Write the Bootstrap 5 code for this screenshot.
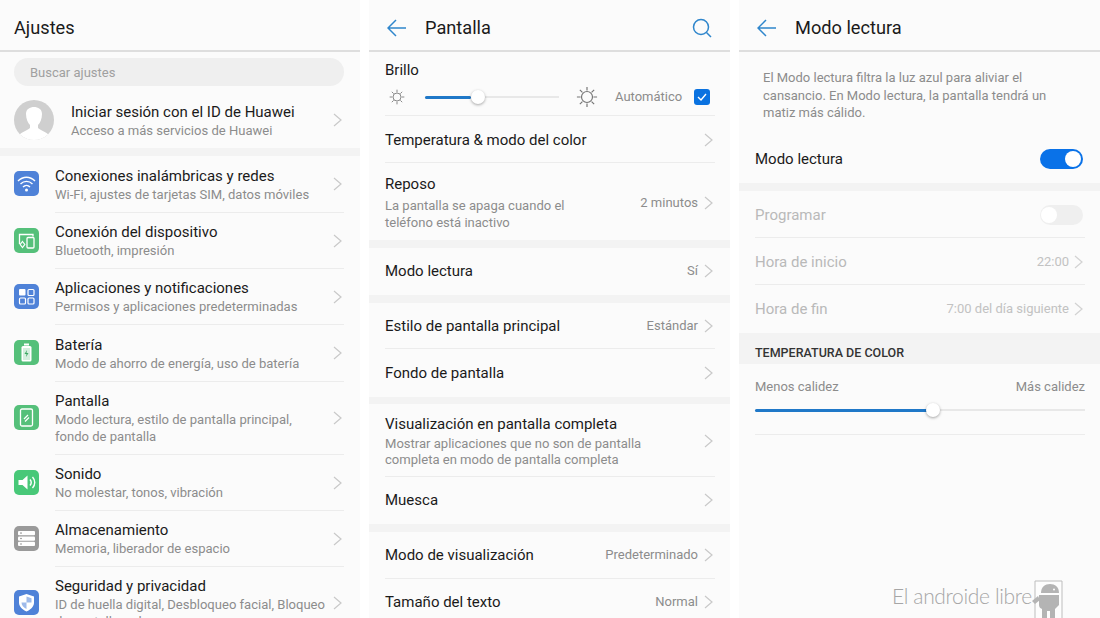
<!DOCTYPE html>
<html lang="es">
<head>
    <meta charset="UTF-8">
    <meta name="viewport" content="width=device-width, initial-scale=1.0">
    <title>Ajustes</title>
    <link href="https://cdn.jsdelivr.net/npm/bootstrap@5.3.0/dist/css/bootstrap.min.css" rel="stylesheet">
    <style>
        html, body { height: 618px; overflow: hidden; background: #fff; }
        body { font-family: Roboto, "Noto Sans", sans-serif; color: #1a1a1a; }
        .pantallas { height: 618px; gap: 9px; position: relative; }
        .panel { width: 361px; height: 618px; background: #fbfbfb; overflow: hidden; flex: none; }
        .panel.primero { width: 360px; }
        .cabecera { height: 52px; border-bottom: 2px solid #dedede; font-size: 18.2px; padding: 6px 0 0 14px; }
        .cabecera.con-flecha { padding-left: 18px; padding-right: 18px; }
        .cabecera svg { flex: none; }
        .cabecera .tit { margin-left: 18px; }
        .buscador { height: 28px; margin: 6px 16px 0 14px; background: #efefef; border-radius: 14px; padding-left: 16px; font-size: 13px; line-height: 29px; color: #a0a0a0; }
        .banda { height: 8px; background: #f3f3f3; }
        .banda.fina { height: 7px; }
        .perfil { height: 62px; padding: 6px 18px 0 14px; }
        .avatar { width: 40px; height: 40px; margin-right: 17px; flex: none; }
        .perfil .textos { padding-top: 2px; }
        .perfil .st { line-height: 18px; }
        .fila-ic { height: 56px; padding-left: 14px; padding-right: 16px; }
        .fila-ic .cuerpo { border-bottom: 1px solid #ececec; height: 100%; margin-left: 16px; min-width: 0; padding-right: 2px; }
        .fila-ic.larga { height: 57px; }
        .fila-ic.alta { height: 73px; }
        .fila-ic.ultima .cuerpo { padding-bottom: 2px; }
        .icono { width: 25px; height: 25px; flex: none; margin-top: -2px; }
        .tt { font-size: 15px; line-height: 20px; color: #1a1a1a; }
        .st { font-size: 13.05px; line-height: 17px; color: #8c8c8c; white-space: nowrap; }
        .st.junto { line-height: 16px; margin-top: 2px; }
        .st.separado { margin-top: 3px; }
        .flecha { width: 9px; height: 14px; flex: none; margin-left: 6px; }
        .fila { padding: 0 15px 0 16px; }
        .fila .cuerpo { height: 100%; border-bottom: 1px solid #ececec; padding-right: 2px; }
        .fila .sin-linea, .sin-linea { border-bottom: 0 !important; }
        .fila.alto-40 { height: 40px; }
        .fila.alto-46 { height: 46px; }
        .fila.alto-47 { height: 47px; }
        .fila.alto-48 { height: 48px; }
        .fila.alto-53 { height: 53px; }
        .fila.alto-73 { height: 73px; }
        .fila.alto-77 { height: 77px; }
        .fila .cuerpo.baja-1 { padding-top: 1px; }
        .fila .cuerpo.baja-2 { padding-top: 2px; }
        .fila .cuerpo.baja-5 { padding-top: 5px; }
        .fila .cuerpo.sube-1 { padding-bottom: 2px; }
        .valor { font-size: 13px; color: #8c8c8c; white-space: nowrap; }
        .fila .cuerpo.brillo { height: 64px; }
        .mando-brillo { margin-top: 6px; }
        .pista { height: 2px; background: #e8e8e8; position: relative; }
        .pista-brillo { width: 134px; margin: 0 17px 0 20px; }
        .pista-color { top: 14px; }
        .pista .relleno { position: absolute; left: 0; top: -0.5px; height: 3px; background: #1f78c8; border-radius: 2px; }
        .pista .mando { position: absolute; top: -6.5px; width: 14px; height: 14px; border-radius: 50%; background: #fff; box-shadow: 0 1px 3px rgba(0,0,0,.35); }
        .casilla { width: 16px; height: 16px; background: #0a72e0; border-radius: 3px; flex: none; }
        .auto { font-size: 13px; color: #8c8c8c; margin: 0 12px 0 17px; }
        .descripcion { font-size: 13px; line-height: 17.5px; color: #8c8c8c; padding: 17px 20px 0 24px; height: 78px; }
        .desactivado .tt { color: #b9b9b9; }
        .desactivado .valor { color: #c2c2c2; }
        .desactivado .flecha { opacity: .8; margin-left: 5px; }
        .interruptor { width: 43px; height: 20px; border-radius: 10px; flex: none; position: relative; background: #0a72e8; }
        .interruptor::after { content: ""; position: absolute; right: 2px; top: 2px; width: 16px; height: 16px; border-radius: 50%; background: #fff; }
        .interruptor.apagado { background: #efefef; }
        .interruptor.apagado::after { right: auto; left: 1px; top: 2px; }
        .seccion { height: 31px; background: #f3f3f3; font-size: 12.5px; font-weight: 500; color: #333; padding: 11px 16px 0; line-height: 17px; }
        .calidez { font-size: 13px; color: #8c8c8c; padding: 14px 15px 0 16px; line-height: 17px; }
        .marca { position: absolute; left: 892px; top: 580px; width: 172px; height: 38px; }
        .marca span { position: absolute; left: 0; top: 1px; font-family: Lato, "Open Sans", sans-serif; font-weight: 300; font-size: 21px; letter-spacing: -.35px; line-height: 30px; color: #a6a6a6; white-space: nowrap; }
        .marca svg { position: absolute; left: 141px; top: 0; overflow: visible; }
    </style>
</head>
<body>
    <svg width="0" height="0" class="d-block position-absolute">
        <symbol id="chev" viewBox="0 0 9 14"><path d="M1 1l7 6-7 6" fill="none" stroke="#c9c9c9" stroke-width="1.2"/></symbol>
        <symbol id="atras" viewBox="0 0 20 18"><path d="M1 9h18M9 1L1 9l8 8" fill="none" stroke="#2f86cc" stroke-width="1.5"/></symbol>
        <symbol id="sol" viewBox="0 0 24 24"><circle cx="12" cy="12" r="6" fill="none" stroke="#777" stroke-width="1.3"/><path d="M12 1v4M12 19v4M1 12h4M19 12h4M4.200 4.200L7 7M17 17l2.800 2.800M19.800 4.200L17 7M7 17l-2.800 2.800" stroke="#777" stroke-width="1.3"/></symbol>
    </svg>

    <div class="pantallas d-flex">
        <!-- Ajustes -->
        <div class="panel primero">
            <div class="cabecera d-flex align-items-center">Ajustes</div>
            <div class="buscador">Buscar ajustes</div>
            <div class="perfil d-flex align-items-center">
                <svg class="avatar" viewBox="0 0 40 40">
                    <defs><clipPath id="circ"><circle cx="20" cy="20" r="20"/></clipPath></defs>
                    <circle cx="20" cy="20" r="20" fill="#cfcfcf"/>
                    <g clip-path="url(#circ)">
                        <path d="M4 38c1-6 9-7 12-10v-3c-2-2-4-6-4-11 0-5 4-7 8-7s8 2 8 7c0 5-2 9-4 11v3c3 3 11 4 12 10v4H4z" fill="#fff"/>
                    </g>
                </svg>
                <div class="textos flex-grow-1">
                    <div class="tt">Iniciar sesión con el ID de Huawei</div>
                    <div class="st">Acceso a más servicios de Huawei</div>
                </div>
                <svg class="flecha"><use href="#chev"/></svg>
            </div>
            <div class="banda"></div>

            <div class="fila-ic larga d-flex align-items-center">
                <svg class="icono" viewBox="0 0 25 25"><rect width="25" height="25" rx="5" fill="#4f82d8"/><path d="M4 10c5-5 12-5 17 0M6.500 13c3.500-3.500 8.500-3.500 12 0M9 16c2-2 5-2 7 0" fill="none" stroke="#fff" stroke-width="1.4"/><circle cx="12.500" cy="19" r="1.500" fill="#fff"/></svg>
                <div class="cuerpo flex-grow-1 d-flex align-items-center">
                    <div class="flex-grow-1"><div class="tt">Conexiones inalámbricas y redes</div><div class="st">Wi-Fi, ajustes de tarjetas SIM, datos móviles</div></div>
                    <svg class="flecha"><use href="#chev"/></svg>
                </div>
            </div>
            <div class="fila-ic d-flex align-items-center">
                <svg class="icono" viewBox="0 0 25 25"><rect width="25" height="25" rx="5" fill="#55c07a"/><path d="M5.500 16V6.500h13.500v2" fill="none" stroke="#fff" stroke-width="1.300"/><rect x="13" y="9.500" width="7" height="10.500" rx="1" fill="none" stroke="#fff" stroke-width="1.300"/><path d="M8.500 13.500l2.300 3-2.300 3-2.300-3z" fill="none" stroke="#fff" stroke-width="1.200"/></svg>
                <div class="cuerpo flex-grow-1 d-flex align-items-center">
                    <div class="flex-grow-1"><div class="tt">Conexión del dispositivo</div><div class="st">Bluetooth, impresión</div></div>
                    <svg class="flecha"><use href="#chev"/></svg>
                </div>
            </div>
            <div class="fila-ic d-flex align-items-center">
                <svg class="icono" viewBox="0 0 25 25"><rect width="25" height="25" rx="5" fill="#4f82d8"/><rect x="5" y="5" width="6.500" height="6.500" rx="1" fill="#fff"/><rect x="14" y="5.500" width="6" height="6" rx="1" fill="none" stroke="#fff" stroke-width="1.200"/><rect x="5.500" y="14" width="6" height="6" rx="1" fill="none" stroke="#fff" stroke-width="1.200"/><rect x="14" y="14" width="6" height="6" rx="1" fill="none" stroke="#fff" stroke-width="1.200"/></svg>
                <div class="cuerpo flex-grow-1 d-flex align-items-center">
                    <div class="flex-grow-1"><div class="tt">Aplicaciones y notificaciones</div><div class="st">Permisos y aplicaciones predeterminadas</div></div>
                    <svg class="flecha"><use href="#chev"/></svg>
                </div>
            </div>
            <div class="fila-ic larga d-flex align-items-center">
                <svg class="icono" viewBox="0 0 25 25"><rect width="25" height="25" rx="5" fill="#55c07a"/><rect x="10" y="3.500" width="5" height="2" fill="#fff"/><rect x="7.500" y="6" width="10" height="15.500" rx="1.500" fill="#fff"/><rect x="9" y="8" width="7" height="12" fill="#55c07a" opacity=".25"/><path d="M13 10l-2.500 4h2l-.5 3 2.500-4h-2z" fill="#3da864"/></svg>
                <div class="cuerpo flex-grow-1 d-flex align-items-center">
                    <div class="flex-grow-1"><div class="tt">Batería</div><div class="st">Modo de ahorro de energía, uso de batería</div></div>
                    <svg class="flecha"><use href="#chev"/></svg>
                </div>
            </div>
            <div class="fila-ic alta d-flex align-items-center">
                <svg class="icono" viewBox="0 0 25 25"><rect width="25" height="25" rx="5" fill="#55c07a"/><rect x="6.500" y="4" width="12" height="17" rx="1.500" fill="none" stroke="#fff" stroke-width="1.300"/><path d="M10 14l4-4M11 16.500l4-4" stroke="#fff" stroke-width="1.200"/></svg>
                <div class="cuerpo flex-grow-1 d-flex align-items-center">
                    <div class="flex-grow-1"><div class="tt">Pantalla</div><div class="st">Modo lectura, estilo de pantalla principal,<br>fondo de pantalla</div></div>
                    <svg class="flecha"><use href="#chev"/></svg>
                </div>
            </div>
            <div class="fila-ic d-flex align-items-center">
                <svg class="icono" viewBox="0 0 25 25"><rect width="25" height="25" rx="5" fill="#48c878"/><path d="M4.500 10h4l5-4.500v14L8.500 15h-4z" fill="#fff"/><path d="M16 9.500c1.500 1.800 1.500 4.200 0 6M18.500 7c3 3.200 3 7.800 0 11" fill="none" stroke="#fff" stroke-width="1.400"/></svg>
                <div class="cuerpo flex-grow-1 d-flex align-items-center">
                    <div class="flex-grow-1"><div class="tt">Sonido</div><div class="st">No molestar, tonos, vibración</div></div>
                    <svg class="flecha"><use href="#chev"/></svg>
                </div>
            </div>
            <div class="fila-ic d-flex align-items-center">
                <svg class="icono" viewBox="0 0 25 25"><rect width="25" height="25" rx="5" fill="#9a9a9a"/><rect x="4" y="5" width="17" height="4.300" rx="1" fill="#fff"/><rect x="4" y="10.400" width="17" height="4.300" rx="1" fill="#fff"/><rect x="4" y="15.800" width="17" height="4.300" rx="1" fill="#fff"/><circle cx="7" cy="7.100" r=".8" fill="#888"/><circle cx="7" cy="12.500" r=".8" fill="#888"/><circle cx="7" cy="18" r=".8" fill="#888"/></svg>
                <div class="cuerpo flex-grow-1 d-flex align-items-center">
                    <div class="flex-grow-1"><div class="tt">Almacenamiento</div><div class="st">Memoria, liberador de espacio</div></div>
                    <svg class="flecha"><use href="#chev"/></svg>
                </div>
            </div>
            <div class="fila-ic alta ultima d-flex align-items-center">
                <svg class="icono" viewBox="0 0 25 25"><rect width="25" height="25" rx="5" fill="#4f82d8"/><path d="M12.500 4l7.500 2.500v6c0 4-3 7-7.500 9-4.500-2-7.500-5-7.500-9v-6z" fill="#fff"/><path d="M12.500 6.500v6H7.500c0 3 2 5 5 6.500v-6.500h5V8.200z" fill="#4f82d8" opacity=".55"/></svg>
                <div class="cuerpo flex-grow-1 d-flex align-items-center sin-linea">
                    <div class="flex-grow-1"><div class="tt">Seguridad y privacidad</div><div class="st">ID de huella digital, Desbloqueo facial, Bloqueo<br>de pantalla y claves</div></div>
                    <svg class="flecha"><use href="#chev"/></svg>
                </div>
            </div>
        </div>

        <!-- Pantalla -->
        <div class="panel">
            <div class="cabecera con-flecha d-flex align-items-center">
                <svg width="20" height="18"><use href="#atras"/></svg>
                <span class="tit flex-grow-1">Pantalla</span>
                <svg width="20" height="20" viewBox="0 0 20 20"><circle cx="9" cy="9" r="7.500" fill="none" stroke="#2f86cc" stroke-width="1.500"/><path d="M14.500 14.500L19 19" stroke="#2f86cc" stroke-width="1.500"/></svg>
            </div>
            <div class="fila">
                <div class="cuerpo brillo">
                    <div class="tt pt-2">Brillo</div>
                    <div class="d-flex align-items-center mando-brillo">
                        <svg width="16" height="16" class="ms-1"><use href="#sol"/></svg>
                        <div class="pista pista-brillo"><div class="relleno" style="width:46px"></div><div class="mando" style="left:46px"></div></div>
                        <svg width="22" height="22"><use href="#sol"/></svg>
                        <span class="auto">Automático</span>
                        <div class="casilla d-flex align-items-center justify-content-center"><svg width="10" height="8" viewBox="0 0 10 8"><path d="M1 4l3 3 5-6" fill="none" stroke="#fff" stroke-width="1.400"/></svg></div>
                    </div>
                </div>
            </div>
            <div class="fila alto-47">
                <div class="cuerpo d-flex align-items-center baja-2">
                    <div class="tt flex-grow-1">Temperatura &amp; modo del color</div>
                    <svg class="flecha"><use href="#chev"/></svg>
                </div>
            </div>
            <div class="fila alto-77">
                <div class="cuerpo sin-linea d-flex align-items-center baja-2">
                    <div class="flex-grow-1"><div class="tt">Reposo</div><div class="st separado">La pantalla se apaga cuando el<br>teléfono está inactivo</div></div>
                    <span class="valor">2 minutos</span>
                    <svg class="flecha"><use href="#chev"/></svg>
                </div>
            </div>
            <div class="banda"></div>
            <div class="fila alto-47">
                <div class="cuerpo sin-linea d-flex align-items-center sube-1">
                    <div class="tt flex-grow-1">Modo lectura</div>
                    <span class="valor">Sí</span>
                    <svg class="flecha"><use href="#chev"/></svg>
                </div>
            </div>
            <div class="banda"></div>
            <div class="fila alto-46">
                <div class="cuerpo d-flex align-items-center">
                    <div class="tt flex-grow-1">Estilo de pantalla principal</div>
                    <span class="valor">Estándar</span>
                    <svg class="flecha"><use href="#chev"/></svg>
                </div>
            </div>
            <div class="fila alto-48">
                <div class="cuerpo sin-linea d-flex align-items-center">
                    <div class="tt flex-grow-1">Fondo de pantalla</div>
                    <svg class="flecha"><use href="#chev"/></svg>
                </div>
            </div>
            <div class="banda fina"></div>
            <div class="fila alto-73">
                <div class="cuerpo d-flex align-items-center baja-2">
                    <div class="flex-grow-1"><div class="tt">Visualización en pantalla completa</div><div class="st junto">Mostrar aplicaciones que no son de pantalla<br>completa en modo de pantalla completa</div></div>
                    <svg class="flecha"><use href="#chev"/></svg>
                </div>
            </div>
            <div class="fila alto-47">
                <div class="cuerpo sin-linea d-flex align-items-center sube-1">
                    <div class="tt flex-grow-1">Muesca</div>
                    <svg class="flecha"><use href="#chev"/></svg>
                </div>
            </div>
            <div class="banda"></div>
            <div class="fila alto-47">
                <div class="cuerpo d-flex align-items-center">
                    <div class="tt flex-grow-1">Modo de visualización</div>
                    <span class="valor">Predeterminado</span>
                    <svg class="flecha"><use href="#chev"/></svg>
                </div>
            </div>
            <div class="fila alto-47">
                <div class="cuerpo sin-linea d-flex align-items-center sube-1">
                    <div class="tt flex-grow-1">Tamaño del texto</div>
                    <span class="valor">Normal</span>
                    <svg class="flecha"><use href="#chev"/></svg>
                </div>
            </div>
        </div>

        <!-- Modo lectura -->
        <div class="panel">
            <div class="cabecera con-flecha d-flex align-items-center">
                <svg width="20" height="18"><use href="#atras"/></svg>
                <span class="tit flex-grow-1">Modo lectura</span>
            </div>
            <div class="descripcion">El Modo lectura filtra la luz azul para aliviar el<br>cansancio. En Modo lectura, la pantalla tendrá un<br>matiz más cálido.</div>
            <div class="fila alto-53">
                <div class="cuerpo sin-linea d-flex align-items-center baja-5">
                    <div class="tt flex-grow-1">Modo lectura</div>
                    <div class="interruptor"></div>
                </div>
            </div>
            <div class="banda"></div>
            <div class="desactivado">
                <div class="fila alto-47">
                    <div class="cuerpo d-flex align-items-center baja-1">
                        <div class="tt flex-grow-1">Programar</div>
                        <div class="interruptor apagado"></div>
                    </div>
                </div>
                <div class="fila alto-47">
                    <div class="cuerpo d-flex align-items-center baja-1">
                        <div class="tt flex-grow-1">Hora de inicio</div>
                        <span class="valor">22:00</span>
                        <svg class="flecha"><use href="#chev"/></svg>
                    </div>
                </div>
                <div class="fila alto-48">
                    <div class="cuerpo sin-linea d-flex align-items-center">
                        <div class="tt flex-grow-1">Hora de fin</div>
                        <span class="valor">7:00 del día siguiente</span>
                        <svg class="flecha"><use href="#chev"/></svg>
                    </div>
                </div>
            </div>
            <div class="seccion">TEMPERATURA DE COLOR</div>
            <div class="calidez d-flex justify-content-between"><span>Menos calidez</span><span>Más calidez</span></div>
            <div class="fila alto-40">
                <div class="cuerpo px-0">
                    <div class="pista pista-color"><div class="relleno" style="width:178px"></div><div class="mando" style="left:171px"></div></div>
                </div>
            </div>
        </div>

        <div class="marca">
            <span>El androide libre</span>
            <svg width="30" height="38" viewBox="0 0 30 38">
                <path d="M2 38V1h27v37" fill="#fdfdfd" stroke="#bdbdbd"/>
                <path d="M8 13c0-6 4-9 9-9s9 3 9 9z" fill="#b4b4b4"/>
                <path d="M6 15h20v10l-4 4v9h-5v-7h-3v7H9v-9c-2-1-3-2-3-4z" fill="#b4b4b4"/>
                <path d="M5 16L-1 21l3 3 5-4z" fill="#b4b4b4"/>
                <circle cx="21" cy="9.500" r="1" fill="#fff"/>
            </svg>
        </div>
    </div>

    <script src="https://cdn.jsdelivr.net/npm/bootstrap@5.3.0/dist/js/bootstrap.bundle.min.js"></script>
</body>
</html>
